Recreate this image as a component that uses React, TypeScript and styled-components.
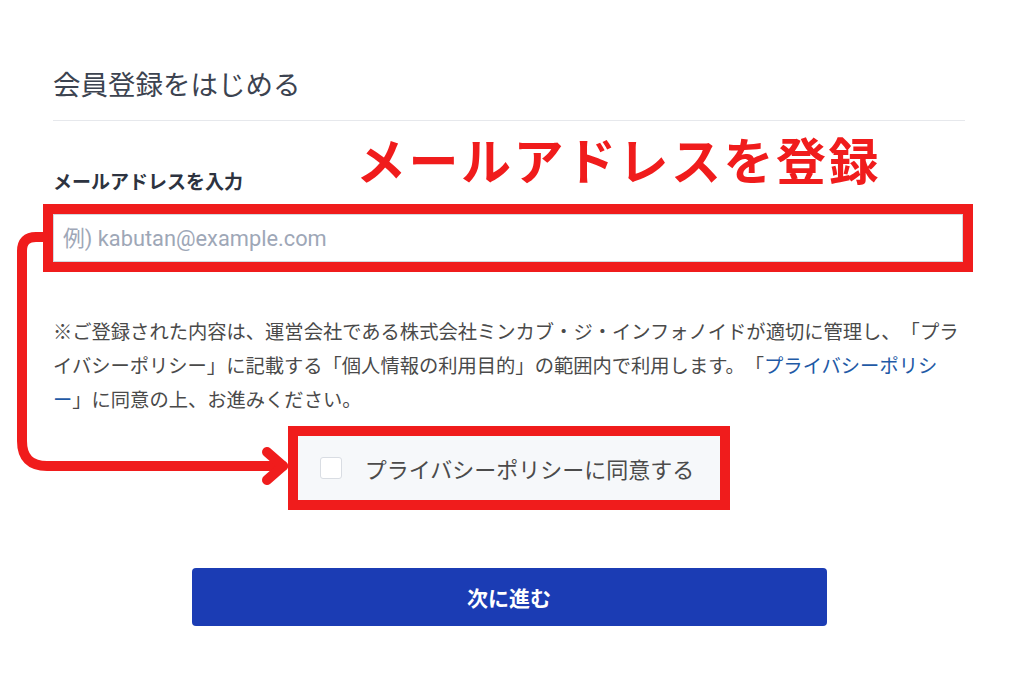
import React from 'react'
import styled, { createGlobalStyle } from 'styled-components'

const GlobalStyle = createGlobalStyle`
  html, body {
    margin: 0;
    padding: 0;
    background: #ffffff;
  }
  body {
    font-family: "Noto Sans CJK JP", "Noto Sans", sans-serif;
  }
`

const RED = '#f01c1c'

const Page = styled.div`
  position: relative;
  width: 1024px;
  height: 683px;
  box-sizing: border-box;
  padding: 65px 59px 0 53px;
  overflow: hidden;
`

const Heading = styled.h1`
  margin: 0;
  font-size: 27.5px;
  line-height: 36px;
  font-weight: 400;
  color: #3c4350;
`

const Divider = styled.hr`
  margin: 19px 0 0;
  border: none;
  height: 1px;
  background: #e6e8ec;
`

const Label = styled.label`
  display: block;
  margin-top: 46px;
  font-size: 19px;
  line-height: 28px;
  font-weight: 700;
  color: #2d3340;
`

const EmailInput = styled.input`
  display: block;
  box-sizing: border-box;
  width: 910px;
  height: 48px;
  margin-top: 19px;
  padding: 0 9px;
  border: 1px solid #d3d8df;
  border-radius: 0;
  outline: 10px solid ${RED};
  background: #fff;
  font-family: Roboto, "Noto Sans CJK JP", sans-serif;
  font-size: 21.8px;
  color: #333;
  &::placeholder {
    color: #9ea7b7;
  }
`

const Notice = styled.p`
  margin: 52px 0 0;
  font-size: 19.3px;
  line-height: 34px;
  color: #4a4a4a;
  line-break: loose;
  text-spacing-trim: space-all;
  white-space: nowrap;
`

const PolicyLink = styled.a`
  color: #1f5aa6;
  text-decoration: none;
`

const AgreeRow = styled.div`
  display: flex;
  justify-content: center;
  margin-top: 20px;
`

const AgreeBox = styled.label`
  display: flex;
  align-items: center;
  gap: 23px;
  height: 64px;
  box-sizing: border-box;
  padding: 0 26px 0 22px;
  background: #f6f8fa;
  outline: 10px solid ${RED};
  font-size: 22px;
  color: #4b4b4b;
`

const CheckSquare = styled.span`
  width: 22px;
  height: 22px;
  box-sizing: border-box;
  border: 1px solid #d9dde3;
  border-radius: 3px;
  background: #fff;
`

const ButtonRow = styled.div`
  display: flex;
  justify-content: center;
  margin-top: 68px;
`

const NextButton = styled.button`
  width: 635px;
  height: 58px;
  border: none;
  border-radius: 4px;
  background: #1b3cb4;
  color: #fff;
  font-family: "Noto Sans CJK JP", sans-serif;
  font-size: 21px;
  font-weight: 700;
`

const Callout = styled.div`
  position: absolute;
  left: 356px;
  top: 133px;
  font-size: 50px;
  line-height: 50px;
  letter-spacing: 2.5px;
  font-weight: 700;
  color: ${RED};
  white-space: nowrap;
`

const ArrowLayer = styled.svg`
  position: absolute;
  left: 0;
  top: 0;
  pointer-events: none;
`

export default function App() {
  return (
    <>
      <GlobalStyle />
      <Page>
        <Heading>会員登録をはじめる</Heading>
        <Divider />
        <Label htmlFor="email">メールアドレスを入力</Label>
        <EmailInput id="email" type="email" placeholder="例) kabutan@example.com" />
        <Notice>
          ※ご登録された内容は、運営会社である株式会社ミンカブ・ジ・インフォノイドが適切に管理し、「プラ
          <br />
          イバシーポリシー」に記載する「個人情報の利用目的」の範囲内で利用します。「
          <PolicyLink href="#">
            プライバシーポリシ
            <br />ー
          </PolicyLink>
          」に同意の上、お進みください。
        </Notice>
        <AgreeRow>
          <AgreeBox>
            <CheckSquare />
            プライバシーポリシーに同意する
          </AgreeBox>
        </AgreeRow>
        <ButtonRow>
          <NextButton type="button">次に進む</NextButton>
        </ButtonRow>

        <Callout>メールアドレスを登録</Callout>
        <ArrowLayer width="1024" height="683" viewBox="0 0 1024 683">
          <g fill="none" stroke={RED} strokeWidth="10" strokeLinecap="round" strokeLinejoin="round">
            <path d="M44 237 H36 Q22 237 22 251 V441 Q22 466 47 466 H283" />
            <path d="M267 452 L283 466 L267 480" />
          </g>
        </ArrowLayer>
      </Page>
    </>
  )
}
